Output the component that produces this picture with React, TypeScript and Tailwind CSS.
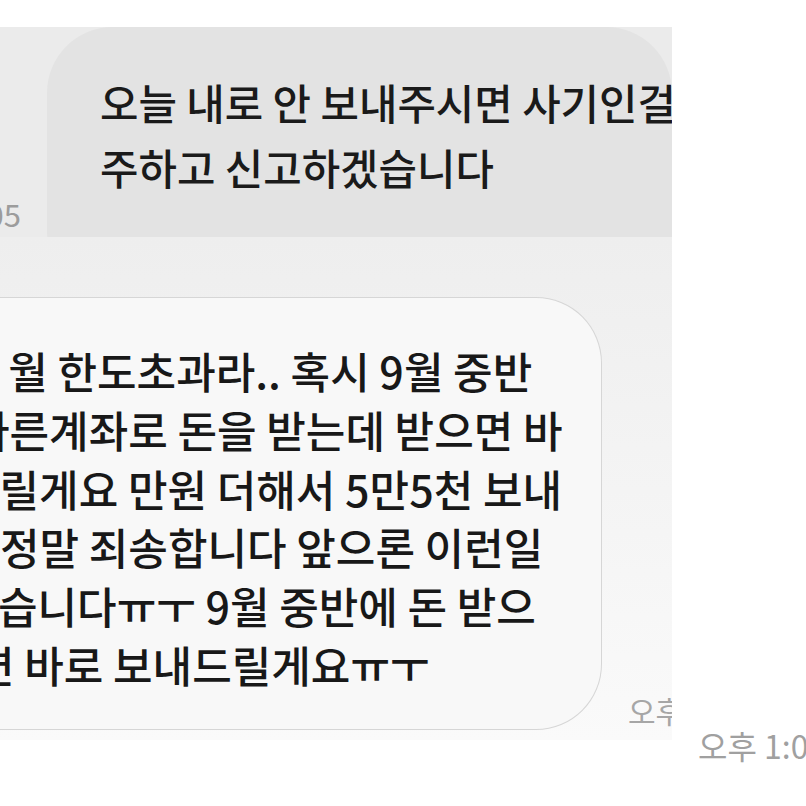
import React from "react";

const replyLines = [
  { text: "가 월 한도초과라.. 혹시 9월 중반", cls: "-ml-[41px]" },
  { text: "다른계좌로 돈을 받는데 받으면 바", cls: "-ml-[30px]" },
  { text: "드릴게요 만원 더해서 5만5천 보내", cls: "-ml-[40px]" },
  { text: "정말 죄송합니다 앞으론 이런일", cls: "ml-0" },
  { text: "습니다ㅠㅜ 9월 중반에 돈 받으", cls: "-ml-[2px]" },
  { text: "면 바로 보내드릴게요ㅠㅜ", cls: "-ml-[25px]" },
];

export default function App() {
  return (
    <div className="w-[806px] h-[806px] overflow-hidden bg-white font-['Noto_Sans_CJK_KR','Noto_Sans',sans-serif]">
      <div className="flex pt-[27px]">
        {/* pasted chat shots */}
        <div className="w-[672px] shrink-0 overflow-hidden flex flex-col">
          {/* top shot: my message */}
          <div className="h-[210px] flex overflow-hidden bg-[#ebebeb]">
            <div className="w-[47px] shrink-0 flex flex-col justify-end pb-[5px]">
              <div className="flex justify-end pr-[26px] overflow-hidden">
                <span className="whitespace-nowrap text-[31px] leading-[36px] text-[#9c9c9c]">
                  1:05
                </span>
              </div>
            </div>
            <div className="flex-1 h-[270px] shrink-0 bg-[#e3e3e3] rounded-t-[66px] rounded-bl-[66px] overflow-hidden pl-[53px] pt-[43px] text-[41.8px] leading-[65px] font-medium text-[#1a1a1a] whitespace-nowrap">
              <p>오늘 내로 안 보내주시면 사기인걸로 간</p>
              <p>주하고 신고하겠습니다</p>
            </div>
          </div>

          {/* bottom shot: their reply */}
          <div className="h-[503px] flex pt-[60px] bg-gradient-to-b from-[#eeeeee] to-[#fafafa]">
            <div className="w-[602px] h-[433px] shrink-0 overflow-hidden bg-[#f8f8f8] border-[1.5px] border-l-0 border-[#d6d6d6] rounded-r-[66px] pt-[43px] text-[43px] leading-[58.8px] font-medium text-[#181818] whitespace-nowrap">
              {replyLines.map((l) => (
                <p key={l.text} className={l.cls}>
                  {l.text}
                </p>
              ))}
            </div>
            <div className="flex-1 flex flex-col justify-end pb-[12px] pl-[26px] overflow-hidden">
              <span className="whitespace-nowrap text-[30px] leading-[36px] text-[#a6a6a6]">
                오후 1:05
              </span>
            </div>
          </div>
        </div>

        {/* timestamp outside the shots */}
        <div className="flex-1 pt-[700px] pl-[26px]">
          <span className="whitespace-nowrap text-[32px] leading-[36px] text-[#a0a0a0]">
            오후 1:05
          </span>
        </div>
      </div>
    </div>
  );
}
